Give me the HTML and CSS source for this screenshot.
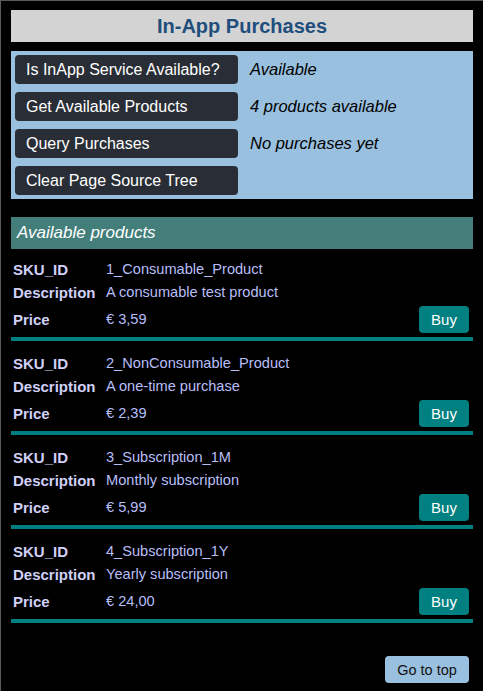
FILE: index.html
```html
<!DOCTYPE html>
<html>
<head>
<meta charset="utf-8">
<link rel="stylesheet" href="styles.css">
</head>
<body>
<div class="page">
  <h1 class="title">In-App Purchases</h1>
  <div class="panel">
    <div class="action-row"><button class="action">Is InApp Service Available?</button><span class="result">Available</span></div>
    <div class="action-row"><button class="action">Get Available Products</button><span class="result">4 products available</span></div>
    <div class="action-row"><button class="action">Query Purchases</button><span class="result">No purchases yet</span></div>
    <div class="action-row"><button class="action">Clear Page Source Tree</button><span class="result"></span></div>
  </div>
  <div class="products-header">Available products</div>
  <div class="products">
    <div class="product">
      <div class="label">SKU_ID</div><div class="value">1_Consumable_Product</div>
      <div class="label">Description</div><div class="value">A consumable test product</div>
      <div class="label">Price</div><div class="value price">€ 3,59<button class="buy">Buy</button></div>
    </div>
    <div class="product">
      <div class="label">SKU_ID</div><div class="value">2_NonConsumable_Product</div>
      <div class="label">Description</div><div class="value">A one-time purchase</div>
      <div class="label">Price</div><div class="value price">€ 2,39<button class="buy">Buy</button></div>
    </div>
    <div class="product">
      <div class="label">SKU_ID</div><div class="value">3_Subscription_1M</div>
      <div class="label">Description</div><div class="value">Monthly subscription</div>
      <div class="label">Price</div><div class="value price">€ 5,99<button class="buy">Buy</button></div>
    </div>
    <div class="product">
      <div class="label">SKU_ID</div><div class="value">4_Subscription_1Y</div>
      <div class="label">Description</div><div class="value">Yearly subscription</div>
      <div class="label">Price</div><div class="value price">€ 24,00<button class="buy">Buy</button></div>
    </div>
  </div>
  <div class="footer"><button class="top-btn">Go to top</button></div>
</div>
</body>
</html>
```
FILE: styles.css
```css
html, body {
  margin: 0;
  padding: 0;
  background: #000;
}
body {
  font-family: "Liberation Sans", Arial, sans-serif;
  border-top: 1px solid #5a5a5a;
  border-left: 1px solid #5a5a5a;
  min-height: 700px;
}
.page {
  padding: 9px 10px 8px 10px;
}
.title {
  margin: 0;
  height: 32px;
  line-height: 32px;
  background: #d3d3d3;
  color: #1f4e7d;
  font-size: 20px;
  font-weight: bold;
  text-align: center;
}
.panel {
  margin-top: 9px;
  background: #9ac0df;
  padding: 4px;
  display: flex;
  flex-direction: column;
  gap: 8px;
}
.action-row {
  display: flex;
  align-items: center;
  gap: 12px;
  height: 29px;
}
.action {
  width: 223px;
  height: 29px;
  background: #292e36;
  color: #fff;
  border: none;
  border-radius: 4px;
  font-family: "Liberation Sans", Arial, sans-serif;
  font-size: 16px;
  text-align: left;
  padding: 0 0 0 11px;
}
.result {
  font-style: italic;
  font-size: 16.5px;
  color: #000;
}
.products-header {
  margin-top: 18px;
  height: 32px;
  line-height: 32px;
  background: #437e7b;
  color: #fff;
  font-style: italic;
  font-size: 17px;
  padding-left: 6px;
}
.product {
  display: grid;
  grid-template-columns: 93px 1fr;
  grid-template-rows: 23px 23px 29px;
  padding: 9px 4px 4px 2px;
  border-bottom: 4px solid #008080;
}
.product + .product {
  margin-top: 2px;
}
.label {
  color: #d0d0f8;
  font-weight: bold;
  font-size: 15px;
  line-height: 23px;
}
.value {
  color: #b8bff8;
  font-size: 14.6px;
  line-height: 23px;
}
.price {
  display: flex;
  justify-content: space-between;
  align-items: flex-end;
}
.label:nth-of-type(5), .price {
  padding-top: 2px;
  line-height: 27px;
}
.buy {
  width: 50px;
  height: 27px;
  background: #008080;
  color: #fff;
  border: none;
  border-radius: 4px;
  font-family: "Liberation Sans", Arial, sans-serif;
  font-size: 15px;
  padding: 0;
}
.footer {
  display: flex;
  justify-content: flex-end;
  padding: 33px 4px 0 0;
}
.top-btn {
  width: 84px;
  height: 27px;
  background: #9ac0df;
  color: #111;
  border: none;
  border-radius: 4px;
  font-family: "Liberation Sans", Arial, sans-serif;
  font-size: 14.5px;
  padding: 0;
}
```
